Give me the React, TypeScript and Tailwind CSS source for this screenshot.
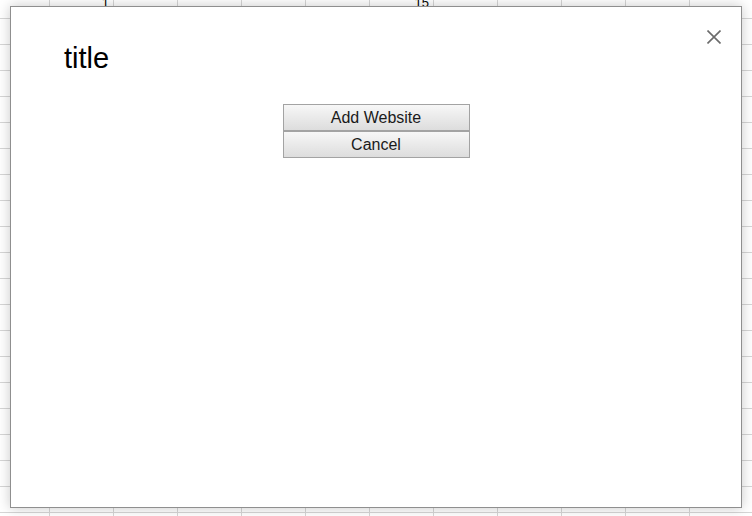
import React from 'react';

const COLS = 11;
const ROWS = 21;

// header numbers sitting in the first (clipped) row
const topLabels: Record<number, string> = { 0: '1', 5: '15' };

const Sheet: React.FC = () => (
  <div className="mt-[-7px] flex flex-col">
    {Array.from({ length: ROWS }).map((_, r) => (
      <div key={r} className="flex">
        <div className="h-[26px] w-[50px] shrink-0 border-r border-b border-[#d6d6d6]" />
        {Array.from({ length: COLS }).map((_, c) => (
          <div
            key={c}
            className="h-[26px] w-[64px] shrink-0 border-r border-b border-[#d6d6d6] pr-[4px] pt-[2px] text-right text-[13px] leading-[16px] text-black"
          >
            {r === 0 ? topLabels[c] ?? '' : ''}
          </div>
        ))}
      </div>
    ))}
  </div>
);

const App: React.FC = () => {
  return (
    <div
      className="relative h-[516px] w-[752px] overflow-hidden bg-white"
      style={{ fontFamily: '"Liberation Sans", Arial, sans-serif' }}
    >
      <Sheet />

      {/* Dialog */}
      <div className="absolute left-[10px] top-[6px] flex h-[502px] w-[732px] flex-col border border-[#8f8f8f] bg-white shadow-[0_0_12px_rgba(0,0,0,0.22)]">
        <button className="absolute right-[20px] top-[23px] flex h-[14px] w-[14px] items-center justify-center">
          <svg width="14" height="14" viewBox="0 0 14 14" fill="none">
            <path d="M0.5 0.5L13.5 13.5M13.5 0.5L0.5 13.5" stroke="#6b6b6b" strokeWidth="1.6" />
          </svg>
        </button>

        <h1 className="pl-[53px] pt-[34px] text-[29px] leading-[34px] font-normal text-black">title</h1>

        <div className="mt-[29px] flex flex-col items-center">
          <button className="h-[27px] w-[187px] border border-[#a3a3a3] bg-gradient-to-b from-[#f7f7f7] to-[#dddddd] text-[16px] leading-[24px] text-[#1a1a1a]">
            Add Website
          </button>
          <button className="h-[27px] w-[187px] border border-[#a3a3a3] bg-gradient-to-b from-[#f7f7f7] to-[#dddddd] text-[16px] leading-[24px] text-[#1a1a1a]">
            Cancel
          </button>
        </div>
      </div>
    </div>
  );
};

export default App;
